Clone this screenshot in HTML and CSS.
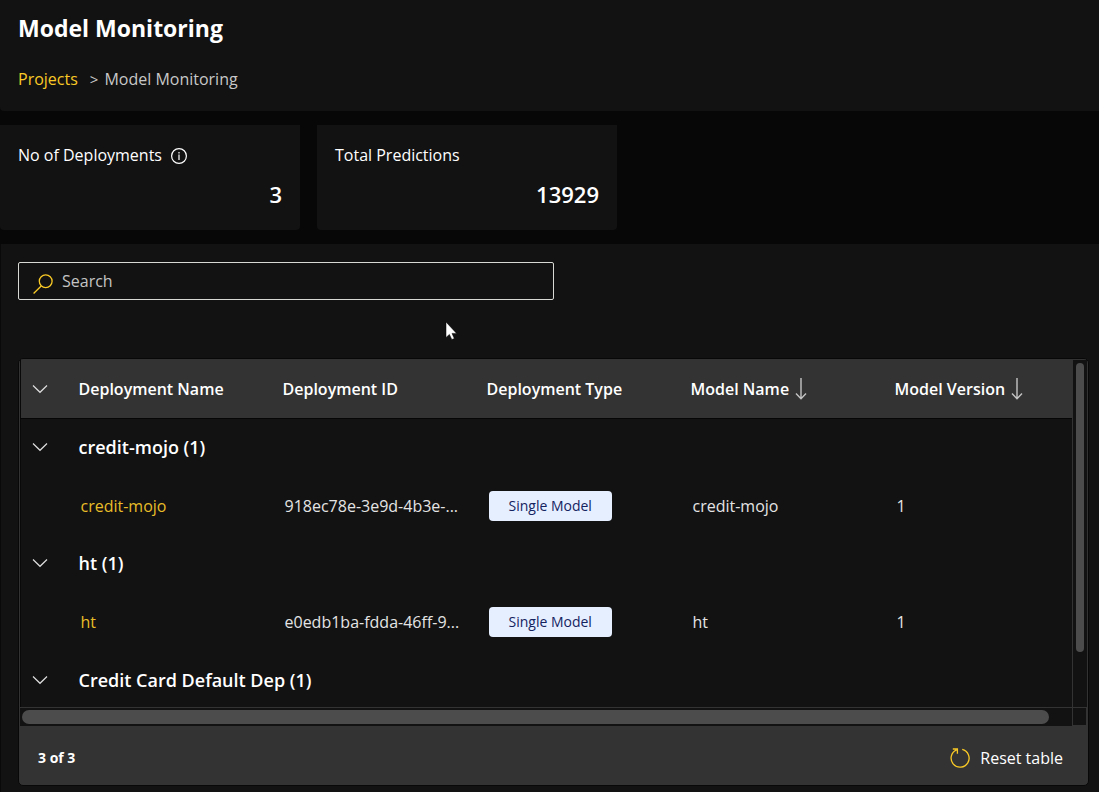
FILE: index.html
```
<!DOCTYPE html>
<html lang="en">
<head>
<meta charset="utf-8">
<title>Model Monitoring</title>
<link rel="stylesheet" href="styles.css">
</head>
<body>
<svg class="defs" aria-hidden="true">
  <symbol id="chevron" viewBox="0 0 16 10"><path d="M1 1.5 8 8.3 15 1.5" fill="none" stroke="currentColor" stroke-width="1.2"/></symbol>
  <symbol id="arrow-down" viewBox="0 0 12 22"><path d="M6 0V20.5M1 15.5 6 20.7 11 15.5" fill="none" stroke="currentColor" stroke-width="1.4"/></symbol>
</svg>
<header class="page-header">
  <h1 class="title">Model Monitoring</h1>
  <nav class="breadcrumb" aria-label="Breadcrumb">
    <a class="link" href="#">Projects</a>
    <span class="separator">&gt;</span>
    <span>Model Monitoring</span>
  </nav>
</header>
<section class="cards">
  <div class="card">
    <div class="card-label">No of Deployments
      <svg class="info" viewBox="0 0 18 18" aria-hidden="true"><circle cx="9" cy="9" r="7.4" fill="none" stroke="currentColor" stroke-width="1.2"/><path d="M9 7.6V13M9 5V6.4" stroke="currentColor" stroke-width="1.2"/></svg>
    </div>
    <div class="card-value">3</div>
  </div>
  <div class="card">
    <div class="card-label">Total Predictions</div>
    <div class="card-value">13929</div>
  </div>
</section>
<main class="panel">
  <label class="search">
    <svg class="search-icon" viewBox="0 0 20 20" aria-hidden="true"><circle cx="12.7" cy="7.3" r="6.4" fill="none" stroke="currentColor" stroke-width="1.3"/><path d="M8.2 12 .6 19.5" stroke="currentColor" stroke-width="1.3"/></svg>
    <input class="search-input" type="text" placeholder="Search" aria-label="Search">
  </label>
  <svg class="pointer" viewBox="0 0 12 18" aria-hidden="true"><path d="M1 0V15.5L4.4 12.4 6.8 17.5 9.3 16.5 7 11.4H11.6Z" fill="#fff" stroke="#000" stroke-width=".5"/></svg>
  <section class="table-box">
    <div class="viewport">
      <table class="table">
        <colgroup><col class="col-toggle"><col class="col-data"><col class="col-data"><col class="col-data"><col class="col-data"><col></colgroup>
        <thead>
          <tr>
            <th><button class="toggle" aria-label="Collapse all"><svg class="chevron"><use href="#chevron"/></svg></button></th>
            <th>Deployment Name</th>
            <th>Deployment ID</th>
            <th>Deployment Type</th>
            <th><span class="sortable">Model Name <svg class="sort"><use href="#arrow-down"/></svg></span></th>
            <th><span class="sortable">Model Version <svg class="sort"><use href="#arrow-down"/></svg></span></th>
          </tr>
        </thead>
        <tbody>
          <tr class="group">
            <td><button class="toggle" aria-label="Collapse credit-mojo"><svg class="chevron"><use href="#chevron"/></svg></button></td>
            <td colspan="5">credit-mojo (1)</td>
          </tr>
          <tr class="item">
            <td></td>
            <td><a class="link" href="#">credit-mojo</a></td>
            <td>918ec78e-3e9d-4b3e-...</td>
            <td><span class="badge">Single Model</span></td>
            <td>credit-mojo</td>
            <td>1</td>
          </tr>
          <tr class="group">
            <td><button class="toggle" aria-label="Collapse ht"><svg class="chevron"><use href="#chevron"/></svg></button></td>
            <td colspan="5">ht (1)</td>
          </tr>
          <tr class="item">
            <td></td>
            <td><a class="link" href="#">ht</a></td>
            <td>e0edb1ba-fdda-46ff-9...</td>
            <td><span class="badge">Single Model</span></td>
            <td>ht</td>
            <td>1</td>
          </tr>
          <tr class="group">
            <td><button class="toggle" aria-label="Collapse Credit Card Default Dep"><svg class="chevron"><use href="#chevron"/></svg></button></td>
            <td colspan="5">Credit Card Default Dep (1)</td>
          </tr>
        </tbody>
      </table>
      <div class="track-y"><div class="thumb-y"></div></div>
      <div class="track-x"><div class="thumb-x"></div></div>
      <div class="corner"></div>
    </div>
    <footer class="table-footer">
      <span class="count">3 of 3</span>
      <button class="reset"><svg class="reset-icon" viewBox="0 0 20 20" aria-hidden="true"><path d="M12.2 1.4A9 9 0 1 1 6.5 1.9M2.8 1H7.4V5.8" fill="none" stroke="currentColor" stroke-width="1.3"/></svg>Reset table</button>
    </footer>
  </section>
</main>
</body>
</html>
```

FILE: styles.css
```
* {
  box-sizing: border-box;
}

body {
  margin: 0;
  background: #070707;
  color: #fff;
  font: 16px/24px "Segoe UI", "Open Sans", "Noto Sans", sans-serif;
}

button {
  padding: 0;
  border: 0;
  background: none;
  color: inherit;
  font: inherit;
}

.defs {
  position: absolute;
  width: 0;
  height: 0;
}

.link {
  color: #f9c926;
  text-decoration: none;
}

.page-header {
  padding: 12px 18px 20px;
  background: #121212;
  border-bottom-left-radius: 4px;
}

.title {
  margin: 0 0 22px;
  font-size: 23px;
  line-height: 33px;
  font-weight: 700;
}

.breadcrumb {
  display: flex;
  color: #c8c8c8;
}

.separator {
  margin: 0 6px 0 12px;
  font-size: 15px;
}

.cards {
  display: flex;
  gap: 17px;
  padding: 14px 0;
}

.card {
  flex: 0 1 300px;
  padding: 18px;
  background: #121212;
  border-radius: 0 0 4px 4px;
}

.card-label {
  display: flex;
  align-items: center;
  gap: 8px;
}

.info {
  width: 18px;
  height: 18px;
  margin-top: 2px;
}

.card-value {
  margin: 11px 0 2px;
  font-size: 22px;
  line-height: 32px;
  font-weight: 600;
  text-align: right;
}

.panel {
  position: relative;
  padding: 18px 10px 7px 17px;
  background: #121212;
  border-left: 1px solid #090909;
}

.search {
  display: flex;
  align-items: center;
  width: 50%;
  height: 38px;
  padding: 0 14px;
  gap: 9px;
  border: 1px solid #d8d8d4;
  border-radius: 2px;
}

.search-icon {
  width: 20px;
  height: 20px;
  margin-top: 5px;
  color: #f9c926;
}

.search-input {
  flex: 1;
  min-width: 0;
  padding: 0;
  border: 0;
  outline: 0;
  background: none;
  color: #fff;
  font: inherit;
}

.search-input::placeholder {
  color: #c4c4c4;
  opacity: 1;
}

.pointer {
  position: absolute;
  top: 78px;
  left: 444px;
  width: 12px;
  height: 18px;
}

.table-box {
  margin-top: 58px;
  border: 1px solid #080808;
  border-radius: 5px;
  background: #333;
}

.viewport {
  display: grid;
  grid-template-columns: 1fr 15px;
  grid-template-rows: auto 19px;
  margin: 0 1px;
  padding-top: 1px;
}

.table {
  width: 100%;
  table-layout: fixed;
  border-collapse: collapse;
  background: #121212;
  border-left: 1px solid #090909;
}

.col-toggle {
  width: 48px;
}

.col-data {
  width: 204px;
}

th,
td {
  height: 58px;
  padding: 0 10px;
  text-align: left;
  white-space: nowrap;
}

th {
  background: #333;
  border-bottom: 1px solid #060606;
  font-weight: 600;
}

.group td {
  font-size: 18px;
  font-weight: 600;
}

.item td {
  padding: 2px 12px 0;
  color: #e4e4e4;
}

.group:last-child td {
  height: 57px;
  padding-top: 2px;
}

.toggle {
  display: flex;
  padding-left: 1px;
}

.chevron {
  width: 16px;
  height: 10px;
  color: #ddd;
}

.sortable {
  display: flex;
  align-items: center;
  gap: 6px;
}

.sort {
  width: 12px;
  height: 22px;
  color: #c4c4c4;
}

.badge {
  display: inline-block;
  padding: 0 20px;
  border-radius: 4px;
  background: #e6efff;
  color: #14235f;
  font-size: 14px;
  line-height: 30px;
  font-weight: 500;
}

.item .link {
  color: #e8bd28;
}

.track-y {
  padding: 3px 3px 0;
  background: #121212;
  border-left: 1px solid #333;
}

.thumb-y {
  width: 8px;
  height: 84%;
  border-radius: 4px;
  background: #4c4c4c;
}

.track-x {
  padding: 2px;
  background: #121212;
  border-top: 1px solid #333;
}

.thumb-x {
  width: 98%;
  height: 14px;
  border-radius: 7px;
  background: #4c4c4c;
}

.corner {
  background: #121212;
  border: 1px solid #333;
}

.table-footer {
  display: flex;
  align-items: center;
  justify-content: space-between;
  height: 59px;
  padding: 4px 25px 0 19px;
}

.count {
  font-size: 14px;
  font-weight: 700;
}

.reset {
  display: flex;
  align-items: center;
  gap: 10px;
}

.reset-icon {
  width: 20px;
  height: 20px;
  color: #f9c926;
}
```
